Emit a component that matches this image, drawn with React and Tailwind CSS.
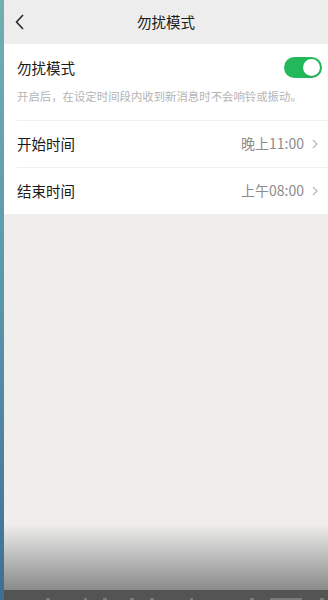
import React, { useState } from 'react';

const FONT = { fontFamily: '"PingFang SC", "Noto Sans CJK SC", "Noto Sans", sans-serif' };

const Chevron = () => (
  <svg width="6" height="10" viewBox="0 0 6 10" className="ml-[8px]">
    <path d="M1 1 L5 5 L1 9" fill="none" stroke="#b8b8b8" strokeWidth="1.2" />
  </svg>
);

const TimeRow = ({ label, value }) => (
  <div className="h-[46px] flex items-center justify-between pr-[10px]">
    <span className="text-[14.5px] text-[#1a1a1a]">{label}</span>
    <div className="flex items-center">
      <span className="text-[14px] text-[#8c8c8c]">{value}</span>
      <Chevron />
    </div>
  </div>
);

// tops of a subtitle line cut off by the frame edge
const marks = [
  { l: 46, w: 4 }, { l: 84, w: 3 }, { l: 103, w: 4 }, { l: 130, w: 4 },
  { l: 150, w: 4 }, { l: 190, w: 3 }, { l: 250, w: 4 }, { l: 270, w: 32 }, { l: 320, w: 4 },
];

export default function App() {
  const [on, setOn] = useState(true);

  return (
    <div className="w-[328px] h-[600px] flex overflow-hidden bg-[#efeeec]" style={FONT}>
      {/* left edge of the video frame */}
      <div className="w-[4px] bg-gradient-to-b from-[#6fb0b2] via-[#5a96ac] to-[#3f6f92]" />

      <div className="flex-1 flex flex-col">
        {/* Header */}
        <div className="h-[44px] bg-[#ededed] flex items-center relative">
          <svg width="10" height="16" viewBox="0 0 10 16" className="ml-[11px]">
            <path d="M8 1 L1.5 8 L8 15" fill="none" stroke="#222" strokeWidth="1.5" />
          </svg>
          <span className="absolute left-0 right-0 text-center text-[14.5px] text-[#1a1a1a]">勿扰模式</span>
        </div>

        {/* Settings */}
        <div className="bg-white pl-[13px]">
          <div className="pt-[13px] pb-[15px] border-b border-[#f0f0f0] pr-[6px]">
            <div className="flex items-center justify-between">
              <span className="text-[14.5px] text-[#1a1a1a]">勿扰模式</span>
              <button
                onClick={() => setOn(v => !v)}
                className={`w-[38px] h-[21px] rounded-full p-[2px] flex items-center ${on ? 'bg-[#22b95c] justify-end' : 'bg-[#dcdcdc] justify-start'}`}
              >
                <span className="w-[17px] h-[17px] rounded-full bg-white shadow-sm" />
              </button>
            </div>
            <div className="mt-[9px] text-[11.4px] text-[#b4b4b4] whitespace-nowrap">
              开启后，在设定时间段内收到新消息时不会响铃或振动。
            </div>
          </div>
          <div className="border-b border-[#f0f0f0]">
            <TimeRow label="开始时间" value="晚上11:00" />
          </div>
          <TimeRow label="结束时间" value="上午08:00" />
        </div>

        <div className="flex-1" />

        {/* video bottom shading */}
        <div className="h-[66px] bg-gradient-to-b from-[#efeeec] via-[#bdbdbd] to-[#8a8a8a]" />
        <div className="h-[10px] bg-[#545454] relative">
          {marks.map((m, i) => (
            <span
              key={i}
              className="absolute bottom-0 h-[2px] bg-[#7c7c7c] rounded-t-[1px]"
              style={{ left: m.l - 4, width: m.w }}
            />
          ))}
        </div>
      </div>
    </div>
  );
}
